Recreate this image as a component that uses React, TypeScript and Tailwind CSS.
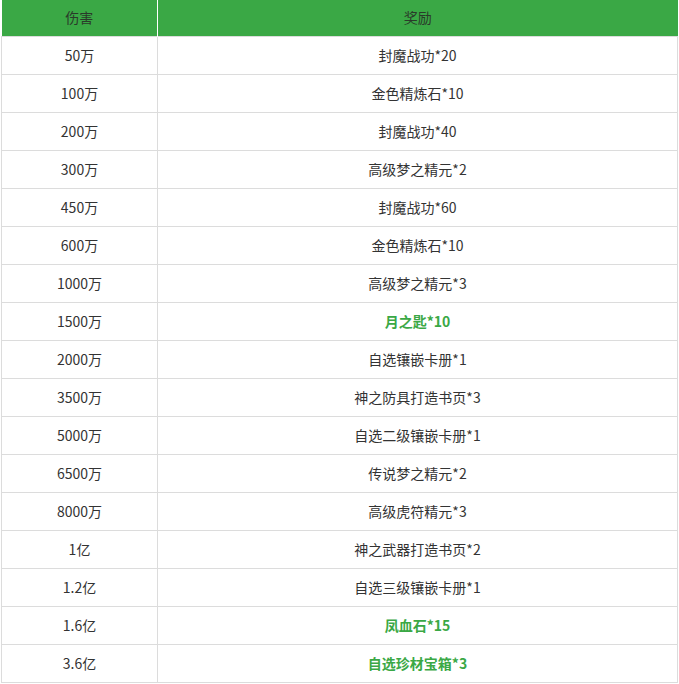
const rows: { dmg: string; reward: string; hl?: boolean }[] = [
  { dmg: "50万", reward: "封魔战功*20" },
  { dmg: "100万", reward: "金色精炼石*10" },
  { dmg: "200万", reward: "封魔战功*40" },
  { dmg: "300万", reward: "高级梦之精元*2" },
  { dmg: "450万", reward: "封魔战功*60" },
  { dmg: "600万", reward: "金色精炼石*10" },
  { dmg: "1000万", reward: "高级梦之精元*3" },
  { dmg: "1500万", reward: "月之匙*10", hl: true },
  { dmg: "2000万", reward: "自选镶嵌卡册*1" },
  { dmg: "3500万", reward: "神之防具打造书页*3" },
  { dmg: "5000万", reward: "自选二级镶嵌卡册*1" },
  { dmg: "6500万", reward: "传说梦之精元*2" },
  { dmg: "8000万", reward: "高级虎符精元*3" },
  { dmg: "1亿", reward: "神之武器打造书页*2" },
  { dmg: "1.2亿", reward: "自选三级镶嵌卡册*1" },
  { dmg: "1.6亿", reward: "凤血石*15", hl: true },
  { dmg: "3.6亿", reward: "自选珍材宝箱*3", hl: true },
]

export default function App() {
  return (
    <div className="bg-white min-h-screen pl-px font-['Noto_Sans_CJK_SC','Liberation_Sans',sans-serif] text-[14px] text-[#333]">
      <table className="w-[677px] border-collapse">
        <thead>
          <tr className="bg-[#3aa845]">
            <th className="h-9 w-[156px] border-r border-white font-normal text-[#2a3a2a]">伤害</th>
            <th className="h-9 font-normal text-[#2a3a2a]">奖励</th>
          </tr>
        </thead>
        <tbody>
          {rows.map((r) => (
            <tr key={r.dmg}>
              <td className="h-[38px] border border-[#dcdcdc] text-center">{r.dmg}</td>
              <td
                className={
                  r.hl
                    ? "h-[38px] border border-[#dcdcdc] text-center font-bold text-[#3aa845]"
                    : "h-[38px] border border-[#dcdcdc] text-center"
                }
              >
                {r.reward}
              </td>
            </tr>
          ))}
        </tbody>
      </table>
    </div>
  )
}
